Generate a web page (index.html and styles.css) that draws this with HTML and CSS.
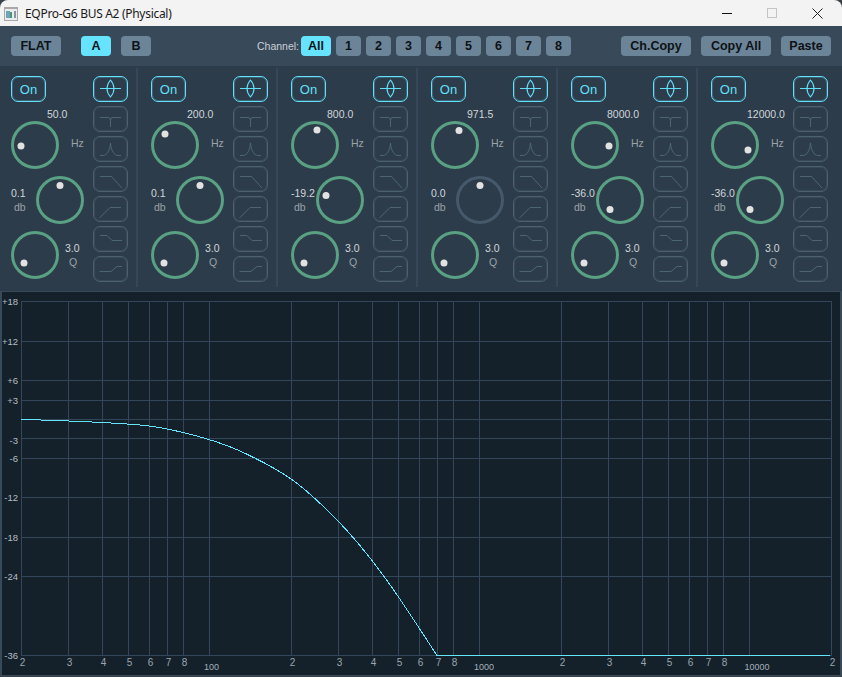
FILE: index.html
```html
<!DOCTYPE html>
<html lang="en">
<head>
<meta charset="utf-8">
<title>EQPro-G6 BUS A2 (Physical)</title>
<link rel="stylesheet" href="styles.css">
</head>
<body>
<svg class="defs" width="0" height="0" aria-hidden="true">
  <symbol id="s-bell" viewBox="0 0 35 26"><path d="M7 12.500H28M17.500 4C14.500 7.500 14 9 14 12.500C14 16 14.500 17.500 17.500 21C20.500 17.500 21 16 21 12.500C21 9 20.500 7.500 17.500 4Z"/></symbol>
  <symbol id="s-notch" viewBox="0 0 35 26"><path d="M7 11.500H15Q17.500 11.500 17.500 14V21M28 11.500H20Q17.500 11.500 17.500 14"/></symbol>
  <symbol id="s-peak" viewBox="0 0 35 26"><path d="M7 19.500H10C14 19.500 17 14 17.500 7C18 14 21 19.500 25 19.500H28"/></symbol>
  <symbol id="s-low" viewBox="0 0 35 26"><path d="M7 10.500H18.500L29 22"/></symbol>
  <symbol id="s-high" viewBox="0 0 35 26"><path d="M6.500 22L17 11.500H28"/></symbol>
  <symbol id="s-lshelf" viewBox="0 0 35 26"><path d="M7 9.500H14L19 14.500H29"/></symbol>
  <symbol id="s-hshelf" viewBox="0 0 35 26"><path d="M6.500 15.500H18L24 10.500H29"/></symbol>
</svg>
<div class="window">
  <header class="titlebar">
    <svg class="appicon" width="14" height="14" viewBox="0 0 14 14" aria-hidden="true">
      <rect x="0" y="0" width="14" height="14" fill="#a8a8a8"/>
      <rect x="1" y="2" width="12" height="11" fill="#e8ecef"/>
      <rect x="2" y="4" width="4" height="7" fill="#6fa3b8"/>
      <rect x="6" y="5" width="2" height="6" fill="#4f9472"/>
      <rect x="10" y="4" width="2" height="7" fill="#87959f"/>
    </svg>
    <span class="title">EQPro-G6 BUS A2 (Physical)</span>
    <div class="winctl">
      <span class="winbtn"><i class="w-min"></i></span>
      <span class="winbtn"><i class="w-max"></i></span>
      <span class="winbtn"><svg width="11" height="11" viewBox="0 0 11 11" aria-hidden="true"><path d="M.5.500L10.500 10.500M10.500.500L.5 10.500" class="w-close"/></svg></span>
    </div>
  </header>

  <nav class="toolbar">
    <button class="tb w50">FLAT</button>
    <button class="tb w30 active ml20">A</button>
    <button class="tb w30 ml10">B</button>
    <span class="chlabel">Channel:</span>
    <button class="tb w30 active">All</button>
    <button class="tb ch">1</button>
    <button class="tb ch">2</button>
    <button class="tb ch">3</button>
    <button class="tb ch">4</button>
    <button class="tb ch">5</button>
    <button class="tb ch">6</button>
    <button class="tb ch">7</button>
    <button class="tb ch">8</button>
    <button class="tb w70 pushright">Ch.Copy</button>
    <button class="tb w70 ml10">Copy All</button>
    <button class="tb w50 ml10">Paste</button>
  </nav>

  <section class="bands">
    <div class="band">
      <div class="controls">
        <button class="on">On</button>
        <div class="freq">50.0</div>
        <div class="row"><svg class="knob" viewBox="0 0 48 48"><circle class="ring" cx="24" cy="24" r="22.5"/><circle class="dot" cx="10" cy="25" r="3.500"/></svg><span class="unit hz">Hz</span></div>
        <div class="row gain"><div class="gtext"><div class="val">0.1</div><div class="unit db">db</div></div><svg class="knob" viewBox="0 0 48 48"><circle class="ring" cx="24" cy="24" r="22.5"/><circle class="dot" cx="24" cy="9.500" r="3.500"/></svg></div>
        <div class="row q"><svg class="knob" viewBox="0 0 48 48"><circle class="ring" cx="24" cy="24" r="22.5"/><circle class="dot" cx="13" cy="32" r="3.500"/></svg><div class="qtext"><div class="val">3.0</div><div class="unit ql">Q</div></div></div>
      </div>
      <div class="shapes">
        <span class="shape sel"><svg><use href="#s-bell"/></svg></span>
        <span class="shape"><svg><use href="#s-notch"/></svg></span>
        <span class="shape"><svg><use href="#s-peak"/></svg></span>
        <span class="shape"><svg><use href="#s-low"/></svg></span>
        <span class="shape"><svg><use href="#s-high"/></svg></span>
        <span class="shape"><svg><use href="#s-lshelf"/></svg></span>
        <span class="shape"><svg><use href="#s-hshelf"/></svg></span>
      </div>
    </div>
    <div class="band">
      <div class="controls">
        <button class="on">On</button>
        <div class="freq">200.0</div>
        <div class="row"><svg class="knob" viewBox="0 0 48 48"><circle class="ring" cx="24" cy="24" r="22.5"/><circle class="dot" cx="14" cy="13" r="3.500"/></svg><span class="unit hz">Hz</span></div>
        <div class="row gain"><div class="gtext"><div class="val">0.1</div><div class="unit db">db</div></div><svg class="knob" viewBox="0 0 48 48"><circle class="ring" cx="24" cy="24" r="22.5"/><circle class="dot" cx="24" cy="9.500" r="3.500"/></svg></div>
        <div class="row q"><svg class="knob" viewBox="0 0 48 48"><circle class="ring" cx="24" cy="24" r="22.5"/><circle class="dot" cx="13" cy="32" r="3.500"/></svg><div class="qtext"><div class="val">3.0</div><div class="unit ql">Q</div></div></div>
      </div>
      <div class="shapes">
        <span class="shape sel"><svg><use href="#s-bell"/></svg></span>
        <span class="shape"><svg><use href="#s-notch"/></svg></span>
        <span class="shape"><svg><use href="#s-peak"/></svg></span>
        <span class="shape"><svg><use href="#s-low"/></svg></span>
        <span class="shape"><svg><use href="#s-high"/></svg></span>
        <span class="shape"><svg><use href="#s-lshelf"/></svg></span>
        <span class="shape"><svg><use href="#s-hshelf"/></svg></span>
      </div>
    </div>
    <div class="band">
      <div class="controls">
        <button class="on">On</button>
        <div class="freq">800.0</div>
        <div class="row"><svg class="knob" viewBox="0 0 48 48"><circle class="ring" cx="24" cy="24" r="22.5"/><circle class="dot" cx="26" cy="9" r="3.500"/></svg><span class="unit hz">Hz</span></div>
        <div class="row gain"><div class="gtext"><div class="val">-19.2</div><div class="unit db">db</div></div><svg class="knob" viewBox="0 0 48 48"><circle class="ring" cx="24" cy="24" r="22.5"/><circle class="dot" cx="10" cy="19.500" r="3.500"/></svg></div>
        <div class="row q"><svg class="knob" viewBox="0 0 48 48"><circle class="ring" cx="24" cy="24" r="22.5"/><circle class="dot" cx="13" cy="32" r="3.500"/></svg><div class="qtext"><div class="val">3.0</div><div class="unit ql">Q</div></div></div>
      </div>
      <div class="shapes">
        <span class="shape sel"><svg><use href="#s-bell"/></svg></span>
        <span class="shape"><svg><use href="#s-notch"/></svg></span>
        <span class="shape"><svg><use href="#s-peak"/></svg></span>
        <span class="shape"><svg><use href="#s-low"/></svg></span>
        <span class="shape"><svg><use href="#s-high"/></svg></span>
        <span class="shape"><svg><use href="#s-lshelf"/></svg></span>
        <span class="shape"><svg><use href="#s-hshelf"/></svg></span>
      </div>
    </div>
    <div class="band">
      <div class="controls">
        <button class="on">On</button>
        <div class="freq">971.5</div>
        <div class="row"><svg class="knob" viewBox="0 0 48 48"><circle class="ring" cx="24" cy="24" r="22.5"/><circle class="dot" cx="28" cy="9.500" r="3.500"/></svg><span class="unit hz">Hz</span></div>
        <div class="row gain"><div class="gtext"><div class="val">0.0</div><div class="unit db">db</div></div><svg class="knob" viewBox="0 0 48 48"><circle class="ring off" cx="24" cy="24" r="22.5"/><circle class="dot" cx="24" cy="9.500" r="3.500"/></svg></div>
        <div class="row q"><svg class="knob" viewBox="0 0 48 48"><circle class="ring" cx="24" cy="24" r="22.5"/><circle class="dot" cx="13" cy="32" r="3.500"/></svg><div class="qtext"><div class="val">3.0</div><div class="unit ql">Q</div></div></div>
      </div>
      <div class="shapes">
        <span class="shape sel"><svg><use href="#s-bell"/></svg></span>
        <span class="shape"><svg><use href="#s-notch"/></svg></span>
        <span class="shape"><svg><use href="#s-peak"/></svg></span>
        <span class="shape"><svg><use href="#s-low"/></svg></span>
        <span class="shape"><svg><use href="#s-high"/></svg></span>
        <span class="shape"><svg><use href="#s-lshelf"/></svg></span>
        <span class="shape"><svg><use href="#s-hshelf"/></svg></span>
      </div>
    </div>
    <div class="band">
      <div class="controls">
        <button class="on">On</button>
        <div class="freq">8000.0</div>
        <div class="row"><svg class="knob" viewBox="0 0 48 48"><circle class="ring" cx="24" cy="24" r="22.5"/><circle class="dot" cx="38" cy="25" r="3.500"/></svg><span class="unit hz">Hz</span></div>
        <div class="row gain"><div class="gtext"><div class="val">-36.0</div><div class="unit db">db</div></div><svg class="knob" viewBox="0 0 48 48"><circle class="ring" cx="24" cy="24" r="22.5"/><circle class="dot" cx="14" cy="33.500" r="3.500"/></svg></div>
        <div class="row q"><svg class="knob" viewBox="0 0 48 48"><circle class="ring" cx="24" cy="24" r="22.5"/><circle class="dot" cx="13" cy="32" r="3.500"/></svg><div class="qtext"><div class="val">3.0</div><div class="unit ql">Q</div></div></div>
      </div>
      <div class="shapes">
        <span class="shape sel"><svg><use href="#s-bell"/></svg></span>
        <span class="shape"><svg><use href="#s-notch"/></svg></span>
        <span class="shape"><svg><use href="#s-peak"/></svg></span>
        <span class="shape"><svg><use href="#s-low"/></svg></span>
        <span class="shape"><svg><use href="#s-high"/></svg></span>
        <span class="shape"><svg><use href="#s-lshelf"/></svg></span>
        <span class="shape"><svg><use href="#s-hshelf"/></svg></span>
      </div>
    </div>
    <div class="band">
      <div class="controls">
        <button class="on">On</button>
        <div class="freq">12000.0</div>
        <div class="row"><svg class="knob" viewBox="0 0 48 48"><circle class="ring" cx="24" cy="24" r="22.5"/><circle class="dot" cx="37" cy="29" r="3.500"/></svg><span class="unit hz">Hz</span></div>
        <div class="row gain"><div class="gtext"><div class="val">-36.0</div><div class="unit db">db</div></div><svg class="knob" viewBox="0 0 48 48"><circle class="ring" cx="24" cy="24" r="22.5"/><circle class="dot" cx="14" cy="33.500" r="3.500"/></svg></div>
        <div class="row q"><svg class="knob" viewBox="0 0 48 48"><circle class="ring" cx="24" cy="24" r="22.5"/><circle class="dot" cx="13" cy="32" r="3.500"/></svg><div class="qtext"><div class="val">3.0</div><div class="unit ql">Q</div></div></div>
      </div>
      <div class="shapes">
        <span class="shape sel"><svg><use href="#s-bell"/></svg></span>
        <span class="shape"><svg><use href="#s-notch"/></svg></span>
        <span class="shape"><svg><use href="#s-peak"/></svg></span>
        <span class="shape"><svg><use href="#s-low"/></svg></span>
        <span class="shape"><svg><use href="#s-high"/></svg></span>
        <span class="shape"><svg><use href="#s-lshelf"/></svg></span>
        <span class="shape"><svg><use href="#s-hshelf"/></svg></span>
      </div>
    </div>
  </section>

  <section class="graph">
    <svg class="plot" width="838" height="383" viewBox="2 292 838 383">
      <path class="grid" d="M21.500 301V655M68.500 301V655M102.500 301V655M128.500 301V655M149.500 301V655M167.500 301V655M183.500 301V655M209.500 301V655M291.500 301V655M338.500 301V655M372.500 301V655M398.500 301V655M419.500 301V655M437.500 301V655M453.500 301V655M479.500 301V655M561.500 301V655M608.500 301V655M642.500 301V655M668.500 301V655M689.500 301V655M707.500 301V655M723.500 301V655M749.500 301V655M831.500 301V655"/>
      <path class="grid" d="M21 301.500H832M21 341.500H832M21 380.500H832M21 400.500H832M21 419.500H832M21 438.500H832M21 458.500H832M21 497.500H832M21 537.500H832M21 576.500H832M21 655.500H832"/>
      <path class="curve" d="M21 419.500C48 420.040 75 421.150 102 422.500C117.670 423.280 133.330 424.120 149 426C160.330 427.360 171.670 429.780 183 432.500C202 437.060 221 442.260 240 451C257 458.820 274 467.100 291 479C306.670 489.970 322.330 504.860 338 521C353 536.450 368 554.750 383 575C401 599.300 419 628 437 655.500H830"/>
      <g class="ylab">
        <text x="18" y="305">+18</text><text x="18" y="345">+12</text><text x="18" y="384">+6</text><text x="18" y="404">+3</text>
        <text x="18" y="444">-3</text><text x="18" y="462">-6</text><text x="18" y="501">-12</text><text x="18" y="541">-18</text><text x="18" y="580">-24</text><text x="18" y="659">-36</text>
      </g>
      <g class="xlab">
        <text x="22.500" y="666">2</text><text x="69.500" y="666">3</text><text x="103.500" y="666">4</text><text x="129.500" y="666">5</text><text x="150.500" y="666">6</text><text x="168.500" y="666">7</text><text x="184.500" y="666">8</text>
        <text class="dec" x="211.500" y="670">100</text>
        <text x="292.500" y="666">2</text><text x="339.500" y="666">3</text><text x="373.500" y="666">4</text><text x="399.500" y="666">5</text><text x="420.500" y="666">6</text><text x="438.500" y="666">7</text><text x="454.500" y="666">8</text>
        <text class="dec" x="484" y="670">1000</text>
        <text x="562.500" y="666">2</text><text x="609.500" y="666">3</text><text x="643.500" y="666">4</text><text x="669.500" y="666">5</text><text x="690.500" y="666">6</text><text x="708.500" y="666">7</text><text x="724.500" y="666">8</text>
        <text class="dec" x="757" y="670">10000</text>
        <text x="832.500" y="666">2</text>
      </g>
    </svg>
  </section>
</div>
</body>
</html>
```

FILE: styles.css
```css
* { box-sizing: border-box; }
html, body { margin: 0; height: 677px; overflow: hidden; background: #39424b; }
.defs { position: absolute; }

.window {
  width: 842px;
  height: 676px;
  display: flex;
  flex-direction: column;
  background: #38495a;
  border-radius: 8px 8px 0 0;
  overflow: hidden;
  font-family: "Liberation Sans", Arial, sans-serif;
}

.titlebar {
  height: 26px;
  flex: none;
  display: flex;
  align-items: center;
  background: #f3f3f3;
  padding-left: 4px;
}
.appicon { flex: none; margin-top: 1px; }
.title {
  margin-left: 7px;
  font: 12px "Noto Sans", sans-serif;
  letter-spacing: -0.3px;
  color: #1a1a1a;
}
.winctl { margin-left: auto; margin-right: 1px; display: flex; }
.winbtn { width: 45px; height: 26px; display: flex; align-items: center; justify-content: center; }
.winbtn:last-child { width: 47px; }
.w-min { display: block; width: 10px; height: 1px; background: #111; }
.w-max { display: block; width: 10px; height: 10px; border: 1px solid #c4c4c4; margin-top: -1px; }
.w-close { stroke: #222; stroke-width: 1; fill: none; }

.toolbar {
  height: 40px;
  flex: none;
  display: flex;
  align-items: center;
  gap: 5px;
  padding-left: 11px;
  background: #38495a;
}
.tb {
  height: 20px;
  padding: 0;
  border: 0;
  border-radius: 4px;
  background: #6c8498;
  color: #0d1216;
  font: bold 12.500px "Liberation Sans", Arial, sans-serif;
}
.tb.active { background: #66e4ff; }
.w30 { width: 30px; }
.w50 { width: 50px; }
.w70 { width: 70px; }
.ch { width: 25px; }
.ml10 { margin-left: 5px; }
.ml20 { margin-left: 15px; }
.chlabel { margin-left: 101px; margin-right: -5px; width: 44px; font-size: 10.500px; color: #c8d0d6; white-space: nowrap; }
.pushright { margin-left: 45px; }

.bands {
  height: 225px;
  flex: none;
  display: flex;
  background: #2c3c4b;
  padding-top: 2px;
}
.band {
  width: 138px;
  height: 219px;
  margin-right: 2px;
  flex: none;
  display: flex;
  padding: 8px 0 0 11px;
  border-right: 2px solid #354758;
}
.band:last-child { border-right-color: transparent; }
.controls { width: 82px; flex: none; }
.shapes { display: flex; flex-direction: column; gap: 4px; }

.on {
  display: block;
  width: 35px;
  height: 26px;
  padding: 0;
  border: 1px solid #64e0fa;
  border-radius: 7px;
  box-shadow: inset 0 0 0 1px rgba(100, 224, 250, .25);
  background: transparent;
  color: #64e0fa;
  font: 13px "Liberation Sans", Arial, sans-serif;
}
.freq {
  height: 14px;
  margin-top: 5px;
  padding-left: 36px;
  font-size: 10.500px;
  line-height: 14px;
  color: #d0d6da;
  white-space: nowrap;
}
.row { display: flex; align-items: center; }
.gain, .q { margin-top: 7px; }
.knob { width: 48px; height: 48px; flex: none; display: block; }
.ring { fill: none; stroke: #5aa183; stroke-width: 3; }
.ring.off { stroke: #46596b; }
.dot { fill: #e2e2e2; }

.gtext { width: 25px; flex: none; white-space: nowrap; }
.qtext { margin-left: 6px; }
.val, .unit { font-size: 10.500px; line-height: 14px; white-space: nowrap; }
.val { color: #d0d6da; }
.unit { color: #9ba2a8; }
.hz { margin-left: 12px; margin-bottom: 4px; }
.db { padding-left: 3px; }
.ql { padding-left: 4px; }

.shape {
  display: block;
  width: 35px;
  height: 26px;
  border: 1px solid #4c606e;
  border-radius: 7px;
  box-shadow: inset 0 0 0 1px rgba(76, 96, 110, .35);
  flex: none;
}
.shape svg {
  display: block;
  width: 35px;
  height: 26px;
  margin: -1px;
  fill: none;
  stroke: #56707e;
  stroke-width: .8;
}
.shape.sel { border-color: #64e0fa; box-shadow: inset 0 0 0 1px rgba(100, 224, 250, .25); }
.shape.sel svg { stroke: #64e0fa; stroke-width: 1.100; }

.graph {
  flex: none;
  height: 385px;
  padding: 1px 2px 0;
  background: #38495a;
}
.plot { display: block; background: #14212b; }
.grid { fill: none; stroke: #33465a; stroke-width: 1; shape-rendering: crispEdges; }
.curve { fill: none; stroke: #64e4ff; stroke-width: 1; shape-rendering: crispEdges; }
.ylab text { font: 9.500px "Liberation Sans", Arial, sans-serif; fill: #b4bec4; text-anchor: end; }
.xlab text { font: 10px "Liberation Sans", Arial, sans-serif; fill: #9aa6ae; text-anchor: middle; }
.xlab text.dec { font-size: 9px; fill: #a4b0b8; }
```
